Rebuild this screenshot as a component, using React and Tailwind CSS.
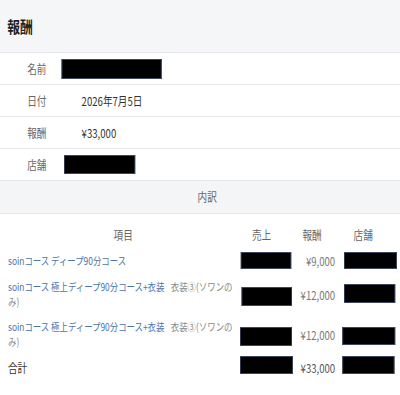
const font = { fontFamily: '"Noto Sans CJK JP", "Noto Sans", sans-serif' }

const Redact = ({ className }) => (
  <div className={'bg-black border border-[#3b4660] ' + className} />
)

const DetailRow = ({ label, children }) => (
  <div className="flex h-[32px] items-center border-b border-[#e8e9eb]">
    <div className="w-[92px] text-center text-[12px] text-[#666]">{label}</div>
    <div className="pl-[10px] text-[12px] text-[#333]">{children}</div>
  </div>
)

const items = [
  {
    name: 'soinコース ディープ90分コース',
    reward: '¥9,000',
    sales: 'w-[63px] h-[17px] ml-[3px]',
    store: 'w-[66px] h-[17px] ml-[6px]',
  },
  {
    name: 'soinコース 極上ディープ90分コース+衣装',
    note: '衣装③(ソワンのみ)',
    reward: '¥12,000',
    sales: 'w-[63px] h-[19px] ml-[4px] mt-[4px]',
    store: 'w-[64px] h-[19px] ml-[6px] mt-[-2px]',
  },
  {
    name: 'soinコース 極上ディープ90分コース+衣装',
    note: '衣装③(ソワンのみ)',
    reward: '¥12,000',
    sales: 'w-[65px] h-[19px] ml-[2px] mt-[4px]',
    store: 'w-[66px] h-[18px] ml-[4px] mt-[4px]',
  },
]

export default function App() {
  return (
    <div className="w-[400px] h-[395px] overflow-hidden bg-white" style={font}>
      <div className="w-[500px] origin-top-left scale-x-[0.8]">
        <div className="flex h-[53px] items-center border-b border-[#e6e7ea] bg-[#f5f6f8] pl-[9px]">
          <h1 className="text-[16px] font-semibold text-[#222]">報酬</h1>
        </div>

        <DetailRow label="名前">
          <Redact className="w-[125px] h-[20px] ml-[-25px]" />
        </DetailRow>
        <DetailRow label="日付">2026年7月5日</DetailRow>
        <DetailRow label="報酬">¥33,000</DetailRow>
        <DetailRow label="店舗">
          <Redact className="w-[89px] h-[19px] ml-[-22px]" />
        </DetailRow>

        <div className="flex h-[33px] items-center justify-center border-b border-[#e6e7ea] bg-[#f4f5f6] pl-[18px] text-[12px] text-[#666]">
          内訳
        </div>

        <div className="mt-[8px] pl-[10px] text-[10.5px] leading-[15px]">
          <div className="grid grid-cols-[288px_58px_68px_60px] items-center py-[5px] text-[12px] text-[#666]">
            <div className="text-center">項目</div>
            <div className="text-center">売上</div>
            <div className="text-center">報酬</div>
            <div className="text-center">店舗</div>
          </div>

          {items.map((it, i) => (
            <div key={i} className="grid grid-cols-[288px_58px_68px_60px] items-center py-[5px]">
              <div>
                <span className="text-[#4a74ad]">{it.name}</span>
                {it.note && <span className="ml-[8px] text-[#888]">{it.note}</span>}
              </div>
              <div><Redact className={it.sales} /></div>
              <div className="pr-[5px] text-right text-[12px] text-[#777]">{it.reward}</div>
              <div><Redact className={it.store} /></div>
            </div>
          ))}

          <div className="grid grid-cols-[288px_58px_68px_60px] items-center py-[6px]">
            <div className="text-[12px] text-[#333]">合計</div>
            <div><Redact className="w-[66px] h-[18px] ml-[2px] mt-[-6px]" /></div>
            <div className="pr-[5px] text-right text-[12px] text-[#555]">¥33,000</div>
            <div><Redact className="w-[65px] h-[18px] ml-[4px] mt-[-6px]" /></div>
          </div>
        </div>
      </div>
    </div>
  )
}
